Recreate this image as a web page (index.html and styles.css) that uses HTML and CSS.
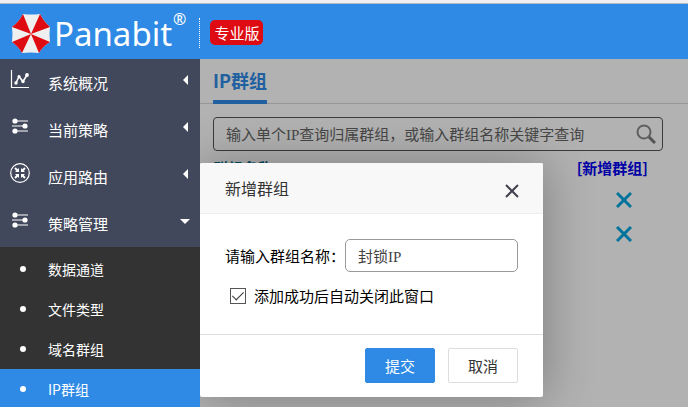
FILE: index.html
```html
<!DOCTYPE html>
<html lang="zh-CN">
<head>
    <meta charset="UTF-8">
    <meta name="viewport" content="width=device-width, initial-scale=1.0">
    <title>Panabit - IP群组</title>
    <link rel="stylesheet" href="styles.css">
</head>
<body>
    <header class="header">
        <svg class="logo" viewBox="0 0 40 40" width="40" height="40">
            <path fill="#efefef" d="M12 0 Q20 1 29 0 Q33 8 39 13 Q38 20 39 28 Q32 32 28 39 Q20 38 11 39 Q7 32 1 28 Q2 20 1 13 Q8 8 12 0Z"/>
            <path fill="#de0c10" d="M20 20 L12 0 Q8 8 1 13Z M20 20 L29 0 Q33 8 39 13Z M20 20 L39 28 Q32 32 28 39Z M20 20 L11 39 Q7 32 1 28Z"/>
        </svg>
        <span class="brand">Panabit</span>
        <span class="reg">®</span>
        <span class="edition"><span class="badge">专业版</span></span>
    </header>

    <div class="layout">
        <!-- Sidebar -->
        <nav class="sidebar">
            <a class="menu-item" href="#">
                <svg class="menu-icon" viewBox="0 0 20 20">
                    <path d="M1.5 1v17.5H19" fill="none" stroke="#fff" stroke-width="1.2"/>
                    <path d="M6 14l3-6.5 4 5 4-6.5" fill="none" stroke="#fff" stroke-width="1.6"/>
                    <g fill="#fff"><circle cx="6" cy="14" r="1.7"/><circle cx="9" cy="7.5" r="1.5"/><circle cx="13" cy="12.5" r="1.7"/><circle cx="17" cy="6" r="1.9"/></g>
                </svg>
                <span class="menu-text">系统概况</span>
                <svg class="arrow" viewBox="0 0 10 10"><path fill="#fff" d="M8 0v10L3 5z"/></svg>
            </a>
            <a class="menu-item" href="#">
                <svg class="menu-icon" viewBox="0 0 20 20">
                    <path d="M5 5h13M2 10h13M5 15h13" stroke="#fff" stroke-width="1.2"/>
                    <g fill="#fff"><circle cx="5" cy="5" r="2.600"/><circle cx="15" cy="10" r="2.6"/><circle cx="5" cy="15" r="2.6"/></g>
                </svg>
                <span class="menu-text">当前策略</span>
                <svg class="arrow" viewBox="0 0 10 10"><path fill="#fff" d="M8 0v10L3 5z"/></svg>
            </a>
            <a class="menu-item" href="#">
                <svg class="menu-icon" viewBox="0 0 20 20">
                    <circle cx="10" cy="10" r="9.3" fill="none" stroke="#fff" stroke-width="1.2"/>
                    <path d="M5 5l3 3M15 5l-3 3M5 15l3-3M15 15l-3-3" stroke="#fff" stroke-width="2"/>
                    <path fill="#fff" d="M9 5v4H5zM11 5v4h4zM9 15v-4H5zM11 15v-4h4z"/>
                </svg>
                <span class="menu-text">应用路由</span>
                <svg class="arrow" viewBox="0 0 10 10"><path fill="#fff" d="M8 0v10L3 5z"/></svg>
            </a>
            <a class="menu-item" href="#">
                <svg class="menu-icon" viewBox="0 0 20 20">
                    <path d="M5 5h13M2 10h13M5 15h13" stroke="#fff" stroke-width="1.2"/>
                    <g fill="#fff"><circle cx="5" cy="5" r="2.6"/><circle cx="15" cy="10" r="2.6"/><circle cx="5" cy="15" r="2.6"/></g>
                </svg>
                <span class="menu-text">策略管理</span>
                <svg class="arrow" viewBox="0 0 10 10"><path fill="#fff" d="M0 3h10L5 8z"/></svg>
            </a>
            <div class="submenu">
                <a class="sub-item" href="#">数据通道</a>
                <a class="sub-item" href="#">文件类型</a>
                <a class="sub-item" href="#">域名群组</a>
                <a class="sub-item active" href="#">IP群组</a>
            </div>
        </nav>

        <!-- Page content -->
        <main class="main">
            <div class="tabs">
                <a class="tab" href="#">IP群组</a>
            </div>
            <div class="content">
                <form class="search">
                    <input class="search-input" type="text" aria-label="查询群组" placeholder="输入单个IP查询归属群组，或输入群组名称关键字查询">
                    <button class="search-btn" type="button" aria-label="查询">
                        <svg viewBox="0 0 20 20" width="20" height="20">
                            <circle cx="8" cy="8" r="6.5" fill="none" stroke="#888" stroke-width="2"/>
                            <path d="M13 13l6 6" stroke="#777" stroke-width="3"/>
                        </svg>
                    </button>
                </form>
                <table class="groups">
                    <thead>
                        <tr>
                            <th>群组名称</th>
                            <th class="op"><a class="add-link" href="#">[新增群组]</a></th>
                        </tr>
                    </thead>
                    <tbody>
                        <tr>
                            <td></td>
                            <td class="op"><button class="delete-btn" aria-label="删除"><svg viewBox="0 0 16 16" width="16" height="16"><path d="M1 1l14 14M15 1L1 15" stroke="#00a5e0" stroke-width="3"/></svg></button></td>
                        </tr>
                        <tr>
                            <td></td>
                            <td class="op"><button class="delete-btn" aria-label="删除"><svg viewBox="0 0 16 16" width="16" height="16"><path d="M1 1l14 14M15 1L1 15" stroke="#00a5e0" stroke-width="3"/></svg></button></td>
                        </tr>
                    </tbody>
                </table>
            </div>

            <div class="mask"></div>

            <!-- Add group dialog -->
            <form class="dialog" role="dialog" aria-labelledby="dialogTitle">
                <div class="dialog-header">
                    <span id="dialogTitle">新增群组</span>
                    <button class="close-btn" type="button" aria-label="关闭">
                        <svg viewBox="0 0 14 14" width="14" height="14"><path d="M1 1l12 12M13 1L1 13" stroke="#43414d" stroke-width="2"/></svg>
                    </button>
                </div>
                <div class="dialog-body">
                    <div class="field">
                        <label for="groupName">请输入群组名称：</label>
                        <input class="name-input" type="text" id="groupName" value="封锁IP">
                    </div>
                    <div class="check">
                        <input class="checkbox" type="checkbox" id="autoClose" checked>
                        <label for="autoClose">添加成功后自动关闭此窗口</label>
                    </div>
                </div>
                <div class="dialog-footer">
                    <button class="btn btn-primary" type="button">提交</button>
                    <button class="btn" type="button">取消</button>
                </div>
            </form>
        </main>
    </div>
</body>
</html>
```
FILE: styles.css
```css
* {
    box-sizing: border-box;
}

body {
    margin: 0;
    height: 100vh;
    overflow: hidden;
    display: flex;
    flex-direction: column;
    font-family: "Noto Sans CJK SC", sans-serif;
    font-size: 15px;
    color: #000;
    background-color: white;
}

a {
    text-decoration: none;
}

button,
input {
    font-family: inherit;
    font-size: 15px;
}

button {
    cursor: pointer;
    padding: 0;
    border: none;
    background: none;
}

svg {
    display: block;
}

/* Header */
.header {
    flex: none;
    display: flex;
    align-items: center;
    height: 59px;
    padding: 5px 11px 0;
    border-top: 3px solid #f0f0f0;
    background-color: #2e8ae5;
    box-shadow: inset 0 1px #b5bcc4;
    color: white;
}

.brand {
    margin-left: 3px;
    font-family: "Noto Sans", sans-serif;
    font-size: 33px;
    line-height: 48px;
}

.reg {
    align-self: flex-start;
    margin-left: 1px;
    font-family: "Noto Sans", sans-serif;
    font-size: 16px;
    line-height: 22px;
}

.edition {
    display: flex;
    align-items: center;
    height: 30px;
    margin-left: 13px;
    margin-bottom: 2px;
    padding-left: 10px;
    border-left: 1px dotted white;
}

.badge {
    padding: 0 4px;
    border-radius: 5px;
    background-color: #de0c12;
    line-height: 25px;
}

.layout {
    flex: 1;
    min-height: 0;
    display: flex;
}

/* Sidebar */
.sidebar {
    flex: none;
    width: 200px;
    overflow: hidden;
    background-color: #42485b;
}

.menu-item {
    display: flex;
    align-items: flex-start;
    height: 47px;
    padding: 10px 10px 0;
    color: white;
}

.menu-icon {
    width: 20px;
    height: 20px;
}

.menu-text {
    flex: 1;
    margin-left: 18px;
    line-height: 28px;
}

.arrow {
    width: 10px;
    height: 22px;
}

.submenu {
    padding-top: 2px;
    background-color: #333;
}

.sub-item {
    display: flex;
    align-items: center;
    height: 40px;
    padding-left: 20px;
    font-size: 14px;
    color: white;
}

.sub-item::before {
    content: "";
    width: 6px;
    height: 6px;
    margin-right: 22px;
    border-radius: 50%;
    background-color: white;
}

.sub-item.active {
    background-color: #2e8ae5;
}

/* Page content */
.main {
    position: relative;
    flex: 1;
    overflow: hidden;
}

.tabs {
    display: flex;
    height: 45px;
    padding-left: 13px;
    border-bottom: 1px solid #d8d8d8;
}

.tab {
    height: 45px;
    border-bottom: 4px solid #2e8ae5;
    font-size: 18px;
    font-weight: bold;
    line-height: 42px;
    color: #2e8ae5;
}

.content {
    padding: 13px 25px 0 13px;
}

.search {
    display: flex;
    align-items: center;
    height: 34px;
    padding: 0 6px 0 12px;
    border: 1px solid #555;
    border-radius: 4px;
}

.search-input {
    flex: 1;
    min-width: 0;
    height: 32px;
    padding: 3px 0 0;
    border: none;
    outline: none;
    background: none;
    font-family: "Liberation Serif", "Noto Sans CJK SC", serif;
}

.search-input::placeholder {
    color: #666;
}

.groups {
    width: 100%;
    border-collapse: collapse;
    line-height: 20px;
}

.groups th,
.groups td {
    height: 34px;
    padding: 0;
    text-align: left;
}

.groups th {
    height: 33px;
    color: #00658c;
}

.groups .op {
    text-align: right;
}

.groups th.op {
    padding-right: 15px;
}

.groups td.op {
    padding-right: 31px;
}

.add-link {
    color: #0000ee;
}

.delete-btn {
    display: inline-block;
    vertical-align: top;
    margin-top: 1px;
}

.mask {
    position: absolute;
    inset: 0;
    background-color: rgba(0, 0, 0, 0.3);
}

/* Dialog */
.dialog {
    position: absolute;
    top: 104px;
    left: 0;
    width: 343px;
    border-radius: 2px;
    background-color: white;
    box-shadow: 1px 1px 50px rgba(0, 0, 0, 0.3);
}

.dialog-header {
    display: flex;
    align-items: center;
    justify-content: space-between;
    height: 51px;
    padding: 0 24px 0 25px;
    border-bottom: 1px solid #eee;
    border-radius: 2px 2px 0 0;
    background-color: #f8f8f8;
    font-size: 16px;
    color: #333;
}

.close-btn {
    margin-top: 5px;
}

.dialog-body {
    padding: 25px 25px 28px;
}

.field {
    display: flex;
    align-items: center;
}

.name-input {
    flex: 1;
    min-width: 0;
    height: 33px;
    padding: 0 12px;
    border: 1px solid #999;
    border-radius: 5px;
    font-family: "Liberation Serif", "Noto Sans CJK SC", serif;
    color: #444;
}

.check {
    display: flex;
    align-items: center;
    gap: 8px;
    margin-top: 13px;
    padding-left: 5px;
}

.checkbox {
    appearance: none;
    display: grid;
    place-items: center;
    width: 16px;
    height: 16px;
    margin: 0;
    border: 1px solid #555;
    background-color: white;
}

.checkbox:checked::after {
    content: "";
    width: 5px;
    height: 10px;
    margin-bottom: 3px;
    border: solid #333;
    border-width: 0 1px 1px 0;
    transform: rotate(45deg);
}

.dialog-footer {
    display: flex;
    justify-content: flex-end;
    gap: 13px;
    padding: 13px 25px 14px;
    border-top: 1px solid #ddd;
}

.btn {
    width: 70px;
    height: 35px;
    border: 1px solid #ddd;
    border-radius: 2px;
    background-color: white;
    color: #333;
}

.btn-primary {
    border-color: #2e8ae5;
    background-color: #2e8ae5;
    color: white;
}
```
